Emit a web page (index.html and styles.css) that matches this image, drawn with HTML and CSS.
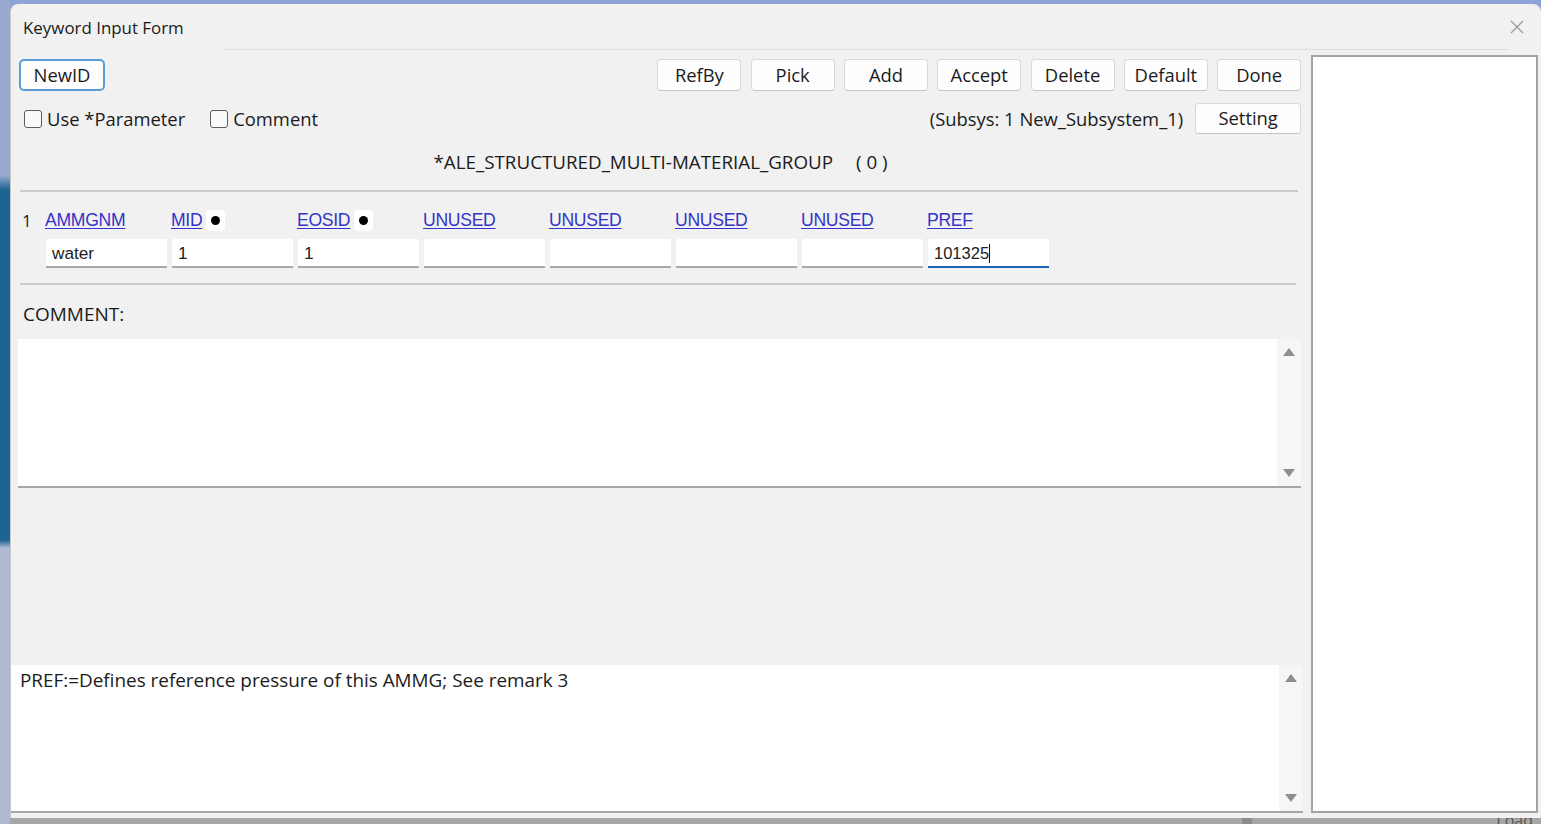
FILE: index.html
```html
<!DOCTYPE html>
<html lang="en">
<head>
<meta charset="utf-8">
<title>Keyword Input Form</title>
<link rel="stylesheet" href="styles.css">
</head>
<body>
<div class="desktop">
  <div class="side-strip"></div>
  <div class="window">
    <div class="titlebar">
      <span class="title">Keyword Input Form</span>
      <span class="title-rule"></span>
      <span class="close" aria-label="Close">
        <svg width="14" height="14" viewBox="0 0 14 14"><path d="M1 1L13 13M13 1L1 13" stroke="#9a9a9a" stroke-width="1.3" fill="none"/></svg>
      </span>
    </div>
    <div class="content">
      <div class="main">
        <div class="toolbar">
          <button class="btn btn-focus btn-newid">NewID</button>
          <div class="btn-group">
            <button class="btn">RefBy</button>
            <button class="btn">Pick</button>
            <button class="btn">Add</button>
            <button class="btn">Accept</button>
            <button class="btn">Delete</button>
            <button class="btn">Default</button>
            <button class="btn">Done</button>
          </div>
        </div>
        <div class="options">
          <label class="check"><span class="box"></span>Use *Parameter</label>
          <label class="check check-2"><span class="box"></span>Comment</label>
          <span class="subsys">(Subsys: 1 New_Subsystem_1)</span>
          <button class="btn btn-setting">Setting</button>
        </div>
        <div class="heading"><span>*ALE_STRUCTURED_MULTI-MATERIAL_GROUP</span><span class="count">( 0 )</span></div>
        <div class="rule"></div>
        <div class="fields">
          <span class="rownum">1</span>
          <span class="lbl"><a href="#">AMMGNM</a></span>
          <span class="lbl"><a href="#">MID</a><span class="dot"></span></span>
          <span class="lbl"><a href="#">EOSID</a><span class="dot"></span></span>
          <span class="lbl"><a href="#">UNUSED</a></span>
          <span class="lbl"><a href="#">UNUSED</a></span>
          <span class="lbl"><a href="#">UNUSED</a></span>
          <span class="lbl"><a href="#">UNUSED</a></span>
          <span class="lbl"><a href="#">PREF</a></span>
          <span></span>
          <span class="inp">water</span>
          <span class="inp">1</span>
          <span class="inp">1</span>
          <span class="inp"></span>
          <span class="inp"></span>
          <span class="inp"></span>
          <span class="inp"></span>
          <span class="inp inp-active">101325<span class="caret"></span></span>
        </div>
        <div class="rule rule-2"></div>
        <div class="comment-label">COMMENT:</div>
        <div class="textbox comment-box">
          <div class="textbox-body"></div>
          <div class="scroll">
            <span class="tri tri-up"></span>
            <span class="tri tri-down"></span>
          </div>
        </div>
        <div class="spacer"></div>
        <div class="textbox help-box">
          <div class="textbox-body help-text">PREF:=Defines reference pressure of this AMMG; See remark 3</div>
          <div class="scroll">
            <span class="tri tri-up"></span>
            <span class="tri tri-down"></span>
          </div>
        </div>
      </div>
      <div class="side-panel"></div>
    </div>
  </div>
  <div class="taskbar"><span class="task-dark"></span><span class="load">Load</span></div>
</div>
</body>
</html>
```
FILE: styles.css
```css
* { box-sizing: border-box; }
html, body { margin: 0; padding: 0; }
body {
  width: 1541px;
  height: 824px;
  overflow: hidden;
  font-family: "Open Sans", "Noto Sans", sans-serif;
  color: #1b1b1b;
}
.desktop {
  position: relative;
  width: 1541px;
  height: 824px;
  background: #8fa4d6;
  padding-top: 4px;
}
.side-strip {
  position: absolute;
  left: 0;
  top: 0;
  width: 10px;
  height: 824px;
  background: linear-gradient(to bottom, #9aa9cf 0, #9aa9cf 175px, #1e6392 190px, #1e6392 540px, #aeb9d2 548px, #aeb9d2 824px);
}
.window {
  position: relative;
  margin-left: 10px;
  width: 1531px;
  height: 814px;
  background: #f1f1f1;
  border-radius: 8px 8px 0 0;
  border-left: 1px solid #c9c9c9;
  display: flex;
  flex-direction: column;
}
.titlebar {
  height: 46px;
  display: flex;
  align-items: center;
  padding-left: 12px;
}
.title {
  font-size: 16.9px;
  color: #1a1a1a;
  white-space: nowrap;
}
.title-rule {
  flex: 1;
  align-self: flex-end;
  margin-left: 41px;
  border-bottom: 1px solid #dedede;
}
.close {
  width: 14px;
  height: 14px;
  margin: 0 17px 0 0;
  display: flex;
}
.close svg { display: block; }
.content {
  flex: 1;
  display: flex;
}
.main {
  width: 1300px;
  display: flex;
  flex-direction: column;
}
.btn {
  font-family: "Open Sans", "Noto Sans", sans-serif;
  font-size: 18.4px;
  color: #1b1b1b;
  background: #fdfdfd;
  border: 1px solid #d8d8d8;
  border-bottom-color: #c4c4c4;
  border-radius: 4px;
  height: 32px;
  width: 84px;
  padding: 0;
  line-height: 1;
}
.toolbar {
  margin-top: 9px;
  padding: 0 9px 0 8px;
  display: flex;
  justify-content: space-between;
  align-items: center;
}
.btn-newid {
  width: 86px;
  border: 2px solid #5b9bd9;
  border-radius: 5px;
}
.btn-group {
  display: flex;
  gap: 9.3px;
}
.options {
  margin-top: 12px;
  height: 31px;
  display: flex;
  align-items: center;
  padding: 0 9px 0 13px;
  font-size: 18.4px;
}
.check {
  display: flex;
  align-items: center;
  gap: 5px;
  white-space: nowrap;
}
.check-2 { margin-left: 25px; }
.box {
  width: 18px;
  height: 18px;
  border: 1.5px solid #5c5c5c;
  border-radius: 3px;
  background: #fafafa;
}
.subsys {
  margin-left: auto;
  margin-right: 12px;
  white-space: nowrap;
}
.btn-setting { width: 106px; height: 31px; }
.heading {
  margin-top: 14px;
  height: 28px;
  display: flex;
  justify-content: center;
  align-items: center;
  font-size: 18.8px;
  gap: 23px;
}
.rule {
  margin: 14px 12px 0 9px;
  border-top: 2px solid #cacaca;
}
.fields {
  margin-top: 16px;
  padding-left: 9px;
  display: grid;
  grid-template-columns: 25px repeat(8, 126px);
  grid-template-rows: 24px 29px;
  row-gap: 7px;
  font-family: "Liberation Sans", Arial, sans-serif;
  font-size: 17.6px;
}
.rownum {
  font-family: "Open Sans", sans-serif;
  font-size: 17px;
  align-self: center;
  padding-left: 2px;
}
.lbl {
  display: flex;
  align-items: center;
  gap: 4px;
}
.lbl a {
  color: #3434c8;
  text-decoration: underline;
  text-underline-offset: 2px;
  letter-spacing: -0.3px;
}
.dot {
  width: 19px;
  height: 21px;
  background: #ffffff;
  border-radius: 4px;
  position: relative;
  display: inline-block;
}
.dot::after {
  content: "";
  position: absolute;
  left: 5px;
  top: 6px;
  width: 9px;
  height: 9px;
  border-radius: 50%;
  background: #000;
}
.inp {
  width: 121px;
  margin-left: 1px;
  height: 29px;
  background: #ffffff;
  border-bottom: 2px solid #a9a9a9;
  border-radius: 2px 2px 0 0;
  display: flex;
  align-items: center;
  padding: 1px 0 0 6px;
  font-size: 17.2px;
  color: #222;
}
.inp-active {
  border-bottom: 2px solid #1f63b8;
  font-size: 16.5px;
}
.caret {
  display: inline-block;
  width: 1px;
  height: 19px;
  background: #111;
}
.rule-2 { margin-top: 15px; margin-right: 14px; }
.comment-label {
  margin-top: 17px;
  height: 24px;
  line-height: 24px;
  padding-left: 12px;
  font-size: 19px;
}
.textbox {
  display: flex;
  background: #ffffff;
  border-bottom: 2px solid #a6a6a6;
}
.comment-box {
  margin: 13px 9px 0 7px;
  height: 149px;
}
.textbox-body { flex: 1; }
.scroll {
  width: 24px;
  background: #f6f6f6;
  display: flex;
  flex-direction: column;
  justify-content: space-between;
  align-items: center;
  padding: 9px 0 9px;
}
.tri {
  width: 0;
  height: 0;
  border-left: 6px solid transparent;
  border-right: 6px solid transparent;
}
.tri-up { border-bottom: 8px solid #8e8e8e; }
.tri-down { border-top: 8px solid #8e8e8e; }
.spacer { flex: 1; }
.help-box {
  margin: 0 7px 5px 0;
  height: 148px;
}
.help-text {
  padding: 3px 0 0 9px;
  font-size: 18.9px;
  line-height: 24px;
  color: #1b1b1b;
}
.side-panel {
  margin: 5px 3px 5px 1px;
  width: 227px;
  background: #ffffff;
  border: 2px solid #a3a3a3;
}
.taskbar {
  height: 6px;
  margin-left: 10px;
  background: #a7a7a7;
  overflow: hidden;
  position: relative;
  display: flex;
}
.task-dark {
  margin-left: 1232px;
  width: 10px;
  background: #8d8d8d;
}
.load {
  position: absolute;
  right: 8px;
  top: -9px;
  font-size: 16px;
  color: #555;
}
```
